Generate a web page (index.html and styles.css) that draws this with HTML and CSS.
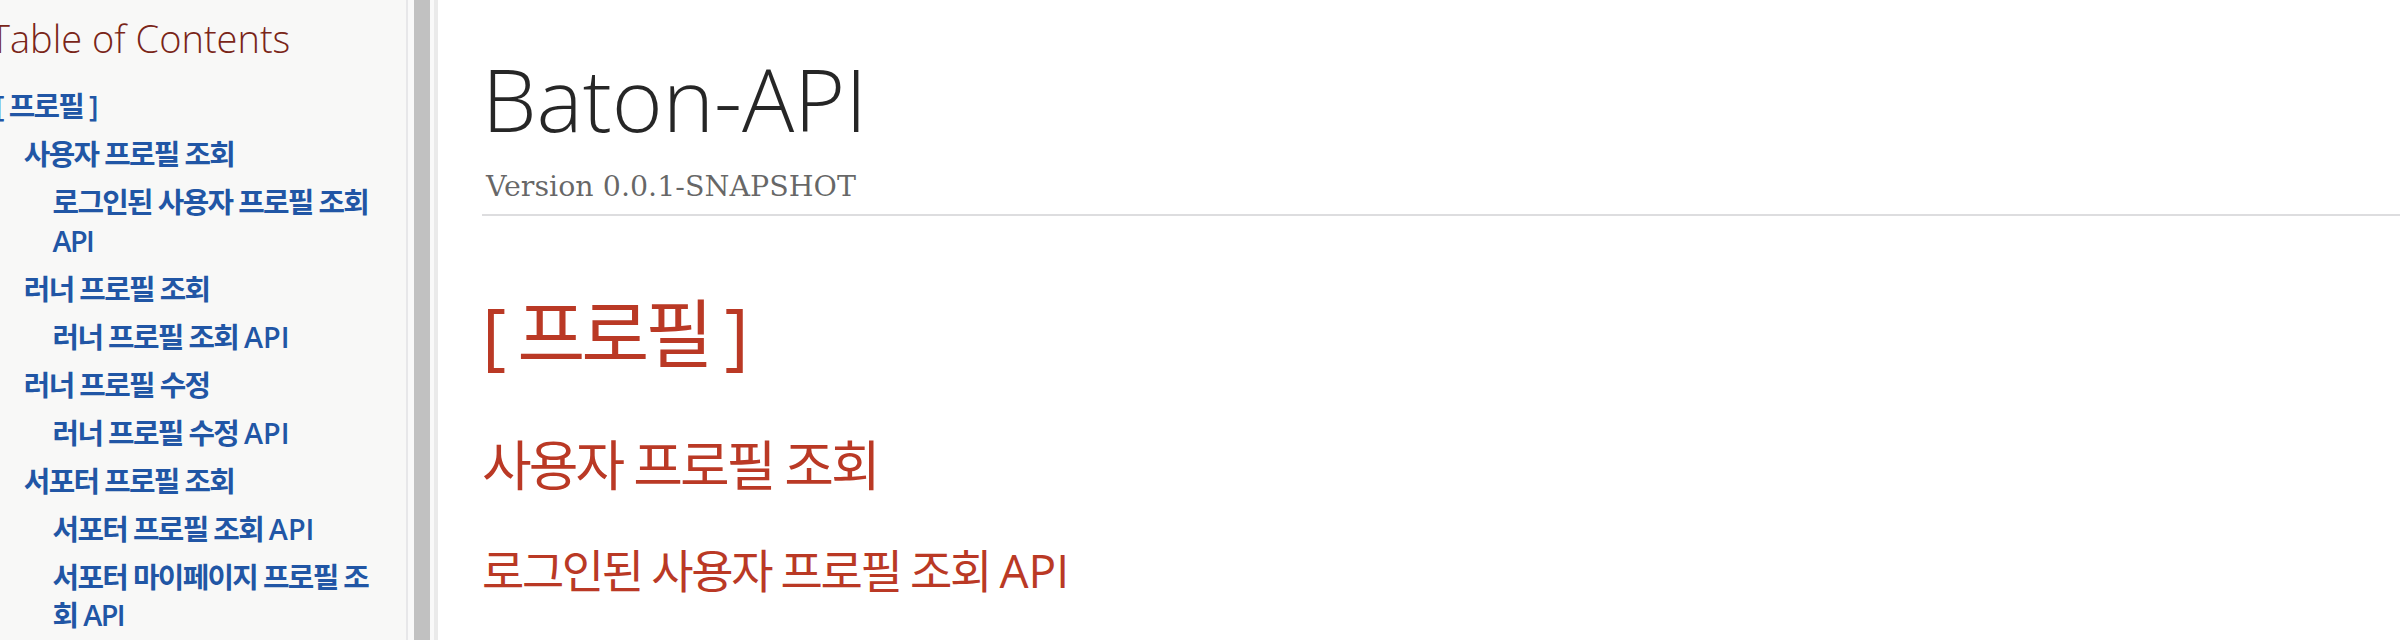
FILE: index.html
```html
<!DOCTYPE html>
<html lang="ko">
<head>
<meta charset="utf-8">
<title>Baton-API</title>
<link rel="stylesheet" href="styles.css">
</head>
<body class="page">
  <nav class="toc">
    <div class="toc-inner">
      <div class="toc-title">Table of Contents</div>
      <ul class="sectlevel1">
        <li><a href="#profile">[ 프로필 ]</a>
          <ul class="sectlevel2">
            <li><a href="#user-profile">사용자 프로필 조회</a>
              <ul class="sectlevel3">
                <li><a href="#login-profile">로그인된 사용자 프로필 조회 API</a></li>
              </ul>
            </li>
            <li><a href="#runner-profile">러너 프로필 조회</a>
              <ul class="sectlevel3">
                <li><a href="#runner-profile-api">러너 프로필 조회 <span class="latin">API</span></a></li>
              </ul>
            </li>
            <li><a href="#runner-edit">러너 프로필 수정</a>
              <ul class="sectlevel3">
                <li><a href="#runner-edit-api">러너 프로필 수정 <span class="latin">API</span></a></li>
              </ul>
            </li>
            <li><a href="#supporter-profile">서포터 프로필 조회</a>
              <ul class="sectlevel3">
                <li><a href="#supporter-profile-api">서포터 프로필 조회 <span class="latin">API</span></a></li>
                <li><a href="#supporter-mypage">서포터 마이페이지 프로필 조회 API</a></li>
              </ul>
            </li>
          </ul>
        </li>
      </ul>
    </div>
  </nav>
  <div class="scrollbar"><div class="thumb"></div></div>
  <main class="content">
    <header class="header">
      <h1 class="doc-title">Baton-API</h1>
      <div class="details"><span class="revnumber">Version 0.0.1-SNAPSHOT</span></div>
    </header>
    <h2 id="profile" class="sect1">[ 프로필 ]</h2>
    <h3 id="user-profile" class="sect2">사용자 프로필 조회</h3>
    <h4 id="login-profile" class="sect3">로그인된 사용자 프로필 조회 <span class="latin">API</span></h4>
  </main>
</body>
</html>
```

FILE: styles.css
```css
html, body {
  margin: 0;
  padding: 0;
}

.page {
  display: flex;
  height: 640px;
  overflow: hidden;
  background: #ffffff;
  font-family: "Open Sans", "Noto Sans CJK KR", sans-serif;
}

.toc {
  flex: none;
  width: 408px;
  height: 640px;
  box-sizing: border-box;
  background: #f8f8f7;
  border-right: 2px solid #e7e7e9;
  padding: 15.5px 29px 0 0;
  overflow: hidden;
}

.toc-inner {
  margin-left: -5px;
}

.toc-title {
  margin-left: -5px;
  font-size: 38px;
  font-weight: 300;
  line-height: 1.2;
  color: #7a2518;
  margin-bottom: 26px;
  white-space: nowrap;
}

.toc ul {
  list-style: none;
  margin: 0;
  padding: 0;
}

.toc ul ul {
  padding-left: 28.8px;
}

.toc li {
  font-size: 28.8px;
  line-height: 38.4px;
  margin-top: 9.6px;
  letter-spacing: -1.65px;
}

.toc a {
  color: #2156a5;
  text-decoration: none;
  font-weight: 600;
}

.latin {
  letter-spacing: 0;
}

.scrollbar {
  flex: none;
  width: 26px;
  height: 640px;
  box-sizing: border-box;
  padding: 0 4px 0 6px;
  background: #f9f9f9;
}

.thumb {
  height: 100%;
  background: #c1c1c1;
}

.content {
  flex: 1;
  min-width: 0;
  border-left: 4px solid #eaeaea;
  padding-left: 44px;
}

.header {
  padding-top: 46px;
}

.doc-title {
  margin: 0;
  font-size: 87px;
  font-weight: 300;
  line-height: 1.2;
  color: rgba(0, 0, 0, 0.85);
}

.details {
  margin-top: 5px;
  padding: 10.7px 0 6.4px 4px;
  border-bottom: 2px solid #dddddf;
  font-family: "DejaVu Serif", serif;
  font-size: 28.5px;
  line-height: 1.45;
  color: rgba(0, 0, 0, 0.6);
}

.sect1, .sect2, .sect3 {
  font-weight: 400;
  line-height: 1.2;
  color: #ba3925;
  margin: 0;
  letter-spacing: -0.055em;
}

.sect1 {
  font-size: 74px;
  margin-top: 73px;
}

.sect2 {
  font-size: 54px;
  margin-top: 55px;
}

.sect3 {
  font-size: 46px;
  margin-top: 46px;
  letter-spacing: -0.052em;
}

.sect3 .latin {
  letter-spacing: 0;
}
```
